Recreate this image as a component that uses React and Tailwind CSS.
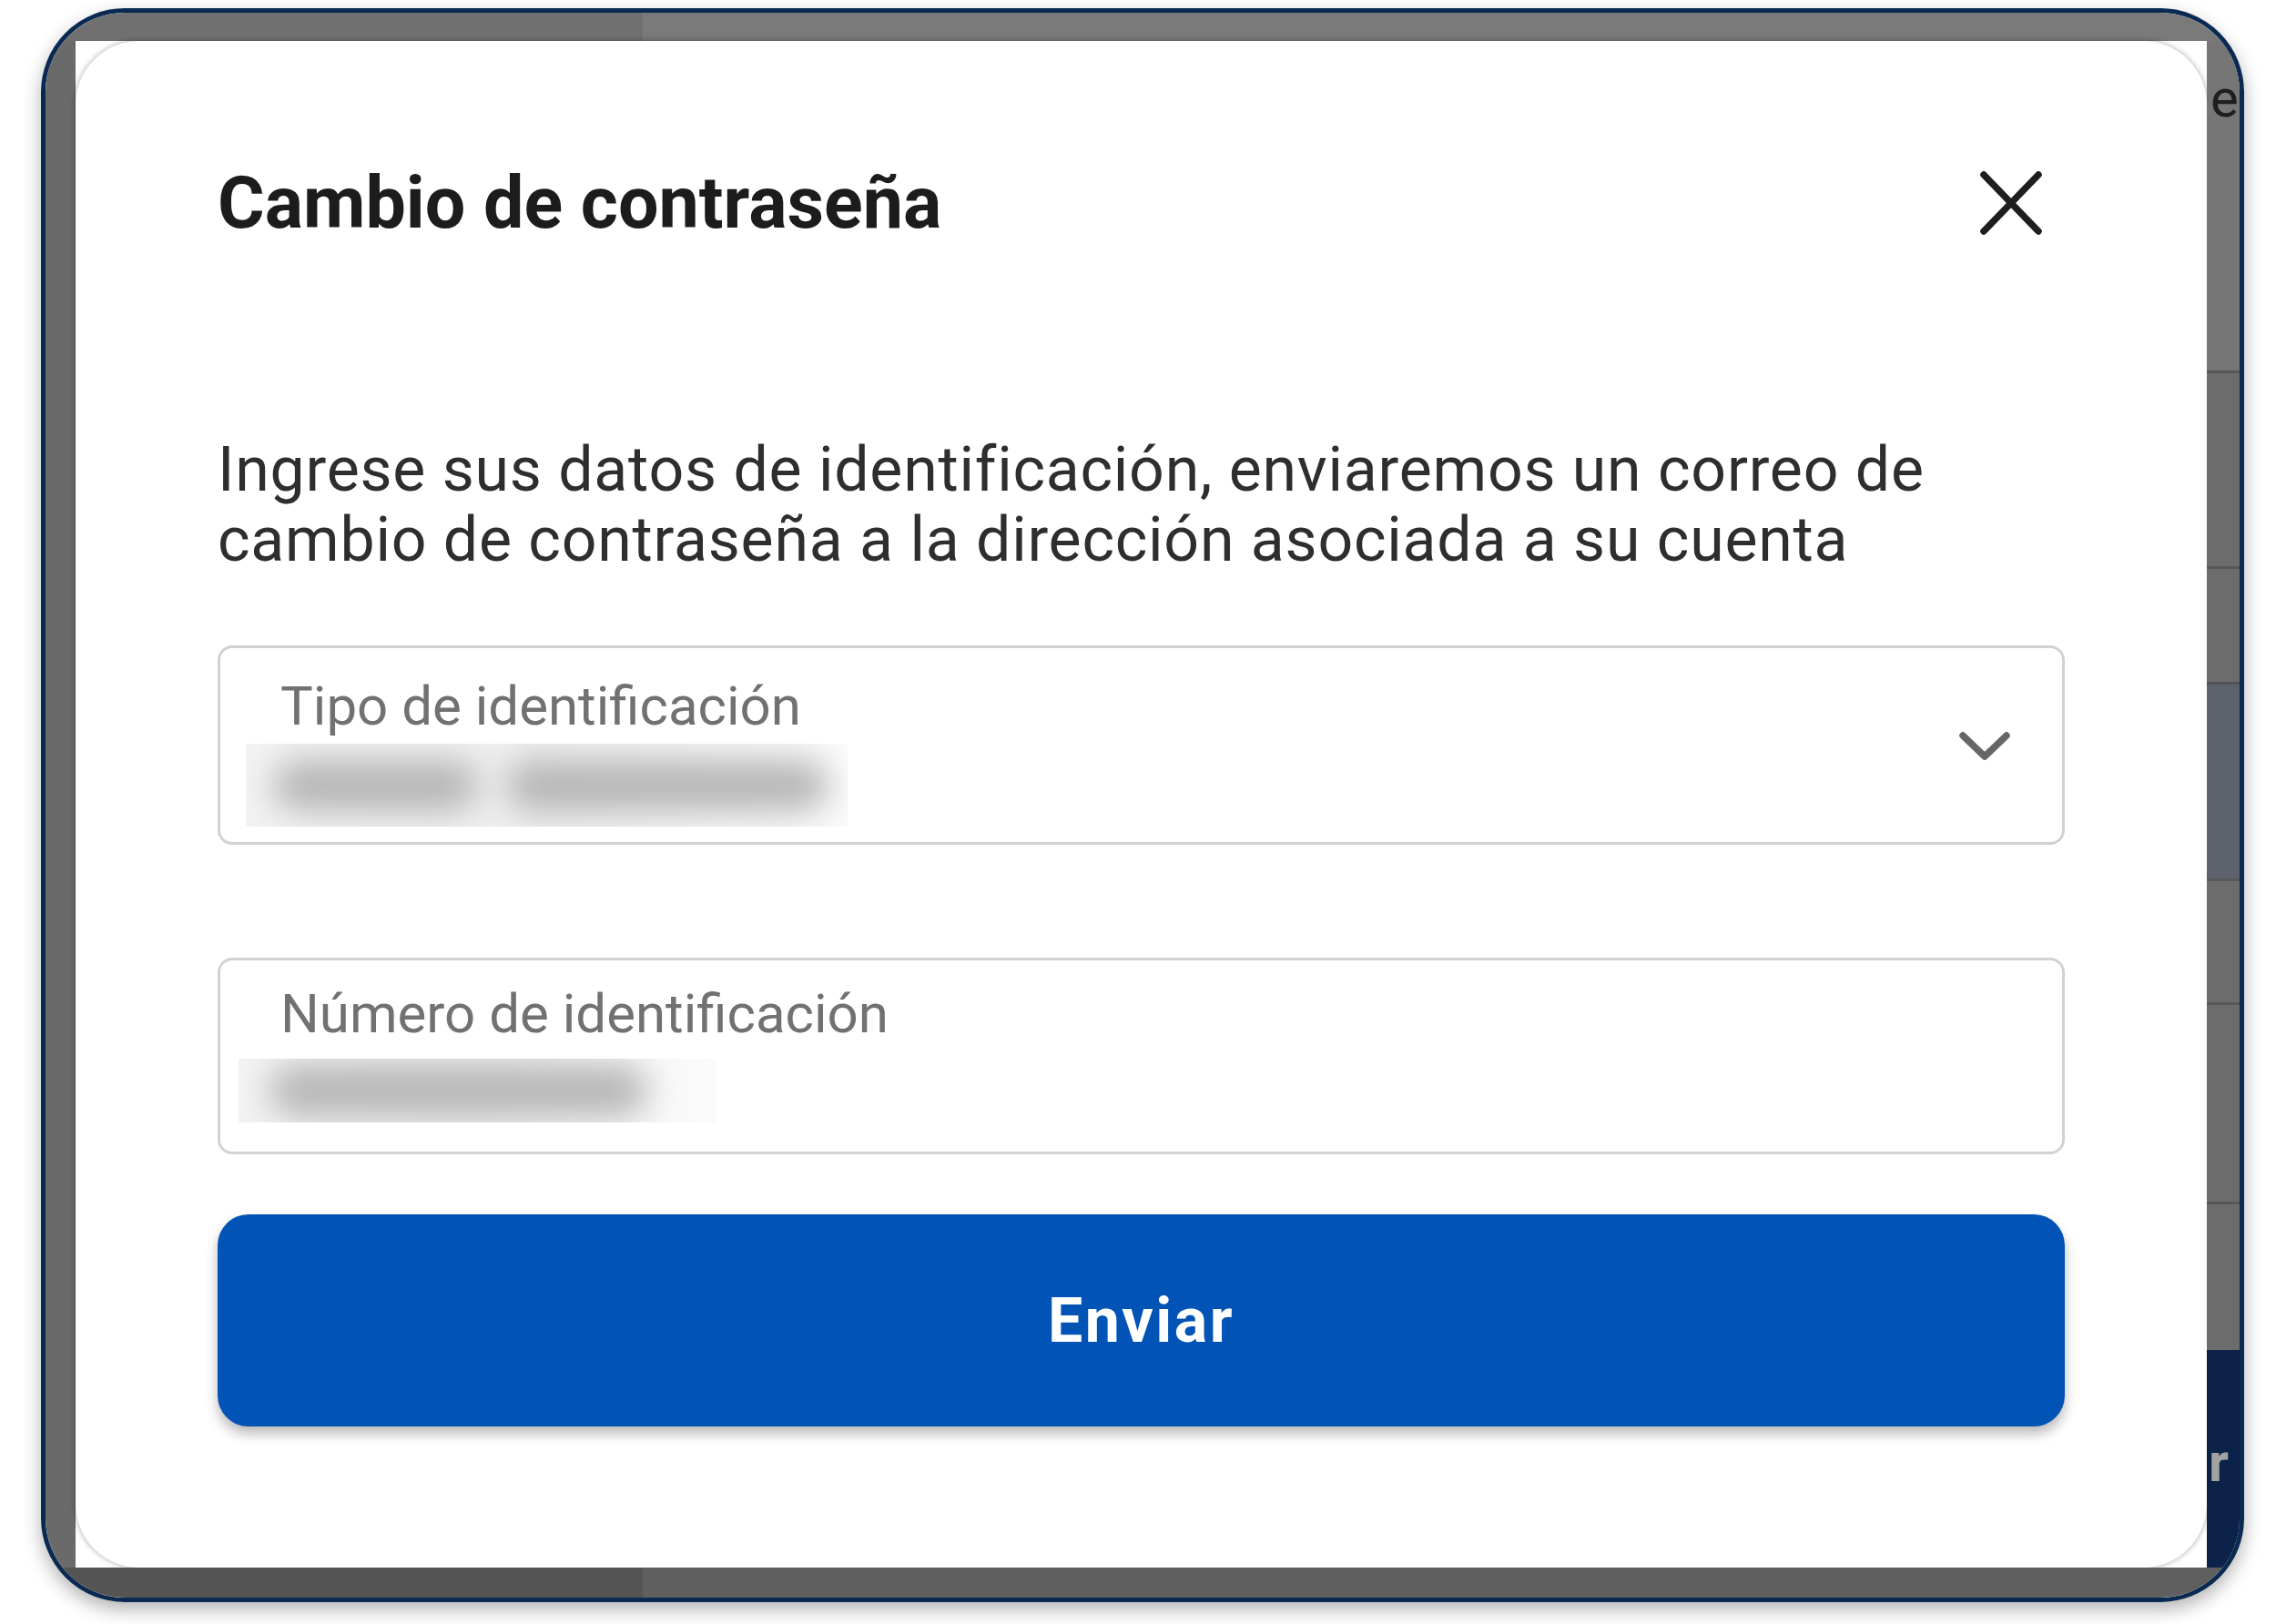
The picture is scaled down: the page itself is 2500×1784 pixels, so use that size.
import React from "react";

function CloseIcon() {
  return (
    <svg width="70" height="72" viewBox="0 0 70 72" fill="none" stroke="#1e1e1e" strokeWidth="7.5" strokeLinecap="round">
      <path d="M5 5 L65 67 M65 5 L5 67" />
    </svg>
  );
}

function ChevronDown() {
  return (
    <svg width="58" height="34" viewBox="0 0 58 34" fill="none" stroke="#666666" strokeWidth="7.5" strokeLinecap="round" strokeLinejoin="round">
      <path d="M5 5 L29 28 L53 5" />
    </svg>
  );
}

// blurred value, the screenshot hides the real data
function BlurredValue({ className, blobs }) {
  return (
    <div className={`bg-linear-to-r from-[#f3f3f3] via-[#efefef] to-[#fbfbfb] flex items-center overflow-hidden ${className}`}>
      {blobs.map((b, i) => (
        <div key={i} className={`h-[56px] rounded-full bg-[#b6b6b6] blur-[18px] ${b}`} />
      ))}
    </div>
  );
}

export default function App() {
  return (
    <div className="w-[2500px] h-[1784px] bg-white pt-[9px] pl-[45px] font-['Roboto',sans-serif]">
      <div className="w-[2420px] h-[1751px] rounded-[92px] border-[5px] border-[#0b2a52] overflow-hidden grid grid-cols-[33px_1fr_36px] grid-rows-[31px_1fr_33px] shadow-[0_8px_20px_rgba(0,0,0,0.3)]">
        {/* page behind the overlay */}
        <div className="col-span-3 flex">
          <div className="w-[656px] bg-[#707070]" />
          <div className="flex-1 bg-[#7a7a7a]" />
        </div>
        <div className="bg-[#6a6a6a]" />

        {/* modal */}
        <div className="bg-white rounded-[70px] px-[156px] pt-[133px] flex flex-col shadow-[0_0_6px_rgba(0,0,0,0.35)]">
          <div className="flex items-center justify-between h-[90px]">
            <h1 className="text-[79px] leading-[90px] font-bold text-[#1c1c1c]">Cambio de contraseña</h1>
            <button className="mr-[24px]">
              <CloseIcon />
            </button>
          </div>

          <p className="mt-[210px] text-[68px] leading-[77px] tracking-[0.75px] text-[#2e2e2e]">
            Ingrese sus datos de identificación, enviaremos un correo de
            <br />
            cambio de contraseña a la dirección asociada a su cuenta
          </p>

          <div className="mt-[77px] h-[219px] border-[3px] border-[#d2d2d2] rounded-[16px] flex">
            <div className="flex-1 flex flex-col pl-[66px] pt-[28px]">
              <span className="text-[60px] leading-[72px] text-[#717171]">Tipo de identificación</span>
              <BlurredValue
                className="mt-[5px] ml-[-38px] w-[661px] h-[91px] pl-[30px] gap-[30px]"
                blobs={["w-[225px]", "w-[355px]"]}
              />
            </div>
            <div className="self-center mr-[56px] mt-[2px]">
              <ChevronDown />
            </div>
          </div>

          <div className="mt-[124px] h-[216px] border-[3px] border-[#d2d2d2] rounded-[16px] flex">
            <div className="flex-1 flex flex-col pl-[66px] pt-[23px]">
              <span className="text-[60px] leading-[72px] text-[#717171]">Número de identificación</span>
              <BlurredValue
                className="mt-[13px] ml-[-46px] w-[525px] h-[70px] pl-[34px]"
                blobs={["w-[415px]"]}
              />
            </div>
          </div>

          <button className="mt-[66px] h-[233px] w-full rounded-[34px] bg-[#0153b6] text-white text-[68px] font-bold tracking-[2.5px] shadow-[0_8px_14px_rgba(0,0,0,0.28)]">
            Enviar
          </button>
        </div>

        <div className="flex flex-col bg-[#6c6c6c]">
          <div className="h-[362px] bg-[#767676] pl-[4px] pt-[34px] text-[58px] leading-[58px] text-[#1e1e1e]">e</div>
          <div className="h-[215px] border-t-[3px] border-[#575757]" />
          <div className="h-[127px] border-t-[3px] border-[#575757]" />
          <div className="h-[216px] border-t-[3px] border-[#4f535b] bg-[#5d626c]" />
          <div className="h-[136px] border-t-[3px] border-[#575757]" />
          <div className="h-[219px] border-t-[3px] border-[#575757]" />
          <div className="h-[163px] border-t-[3px] border-[#575757]" />
          <div className="flex-1 bg-[#0c2248] pt-[94px] pl-[2px] text-[60px] leading-[60px] font-bold text-[#a3a3a3]">r</div>
        </div>

        <div className="col-span-3 flex">
          <div className="w-[656px] bg-[#545454]" />
          <div className="flex-1 bg-[#5f5f5f]" />
        </div>
      </div>
    </div>
  );
}
